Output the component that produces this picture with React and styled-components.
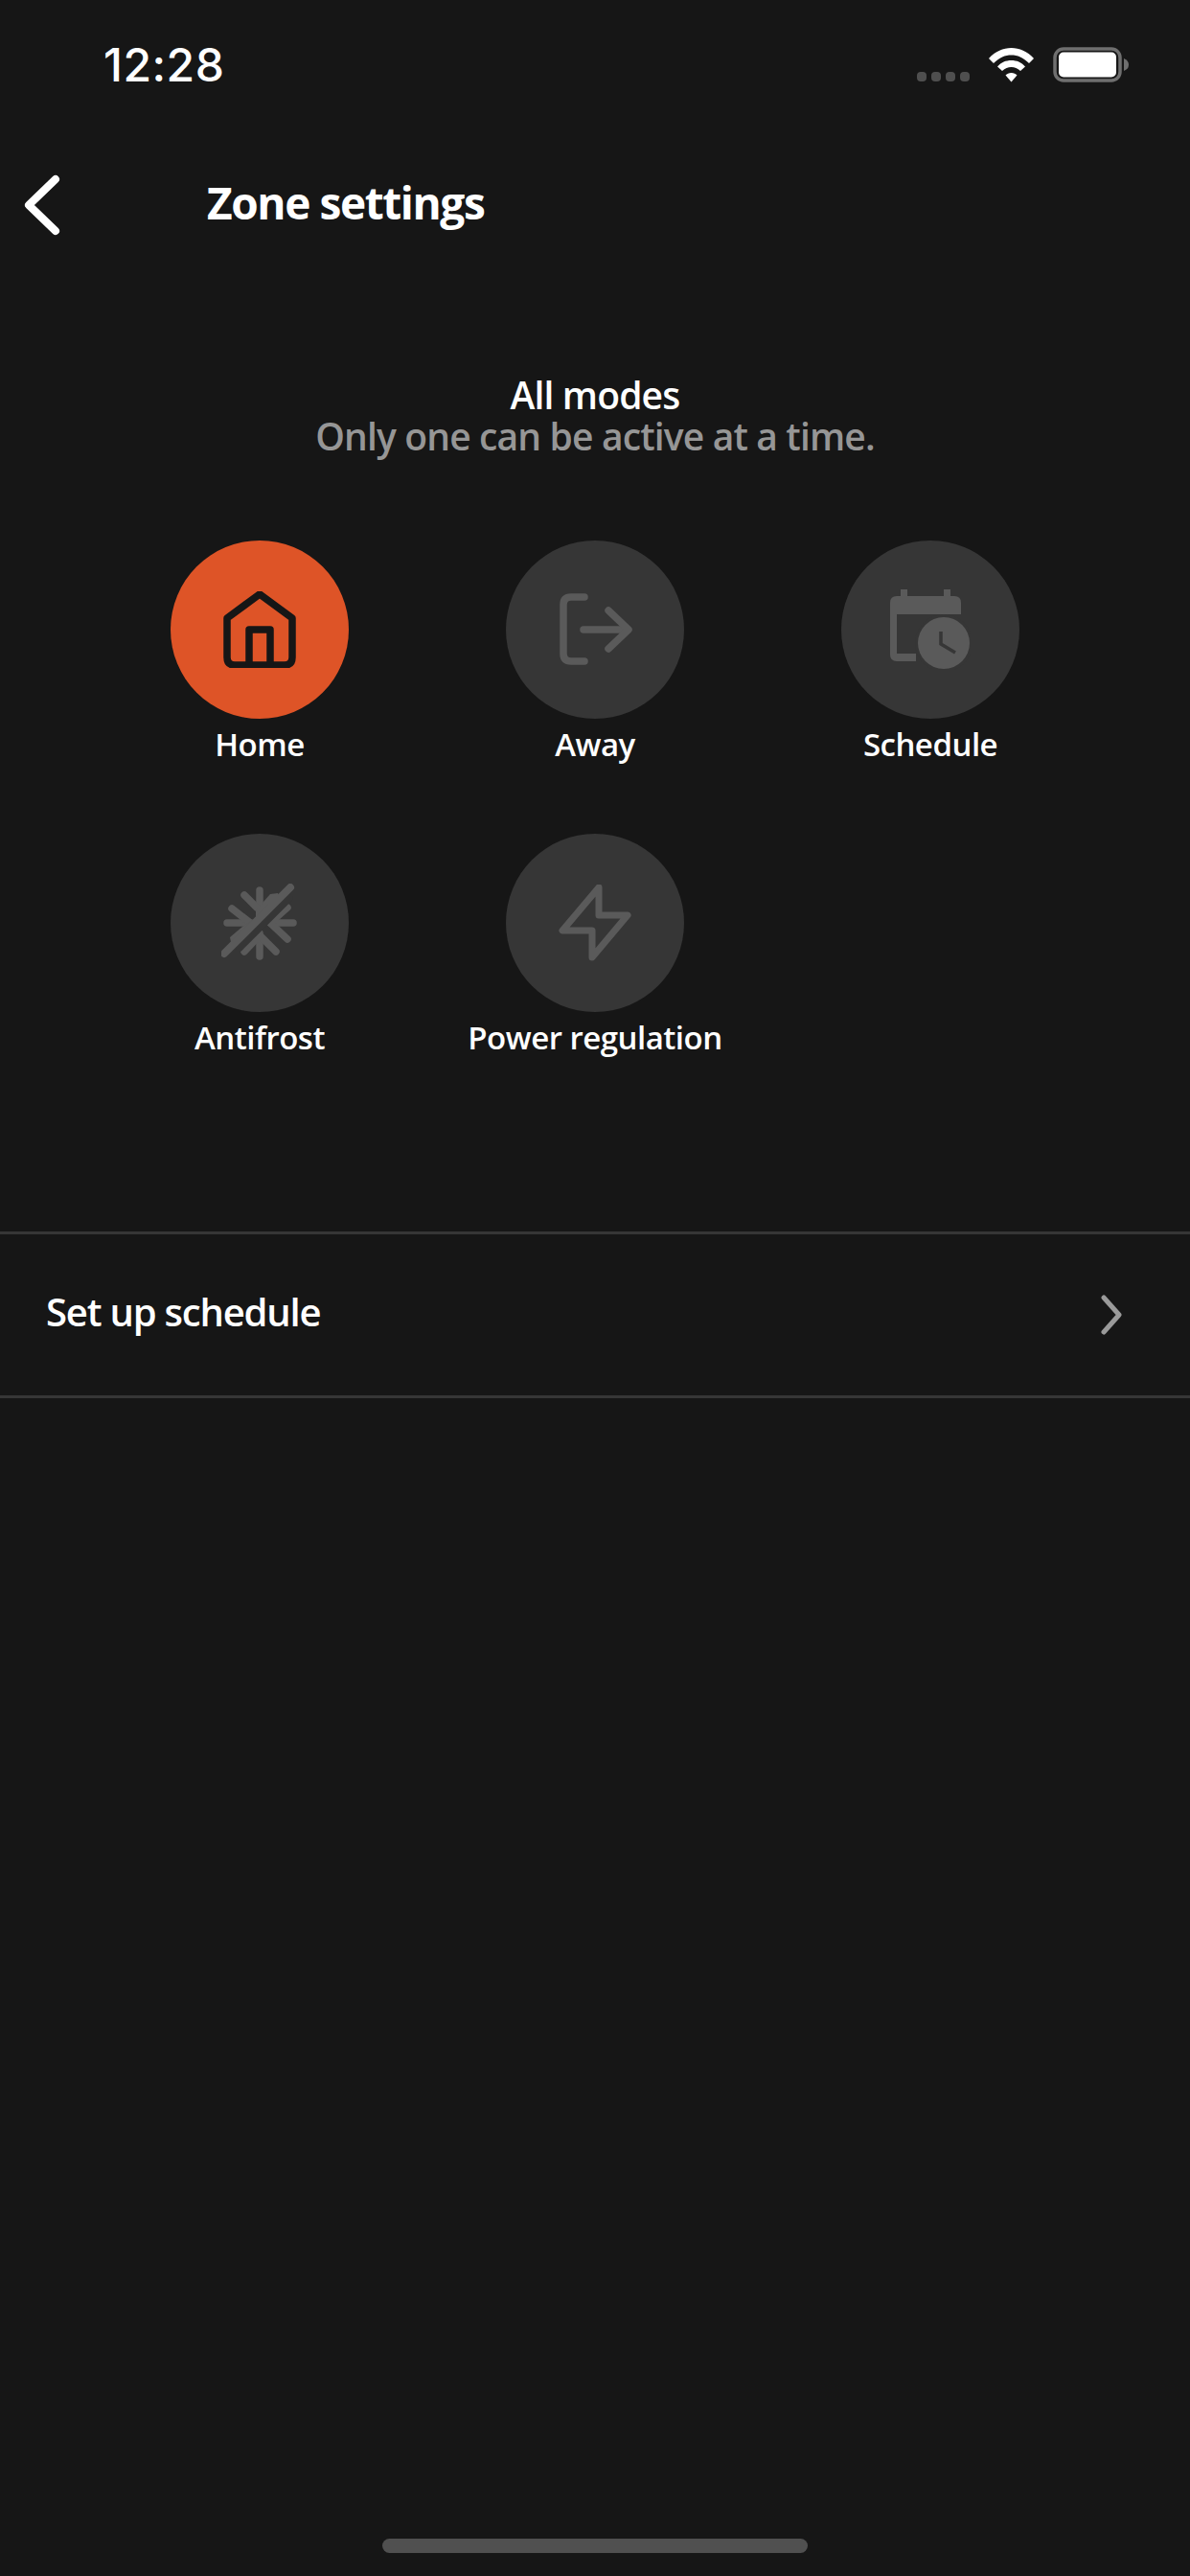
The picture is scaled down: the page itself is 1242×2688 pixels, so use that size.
import React from "react";
import styled, { createGlobalStyle } from "styled-components";

const GlobalStyle = createGlobalStyle`
  html, body {
    margin: 0;
    padding: 0;
    background: #161616;
  }
  * {
    box-sizing: border-box;
  }
`;

const MODES = [
  { key: "home", label: "Home", active: true },
  { key: "away", label: "Away" },
  { key: "schedule", label: "Schedule" },
  { key: "antifrost", label: "Antifrost" },
  { key: "power", label: "Power regulation" },
];

const HomeIcon = () => (
  <svg width="80" height="80" viewBox="81 77 80 80" fill="none" stroke="currentColor" strokeWidth="7.500" strokeLinejoin="round">
    <path d="M121 80 L155 105 V146 Q155 154 147 154 H95 Q87 154 87 146 V105 Z" />
    <path d="M110 154 V117 H132 V154" />
  </svg>
);

const AwayIcon = () => (
  <svg width="80" height="80" viewBox="61 57 80 80" fill="none" stroke="currentColor" strokeWidth="7.500" strokeLinecap="round" strokeLinejoin="round">
    <path d="M90 63 H76 Q68 63 68 71 V122 Q68 130 76 130 H90" />
    <path d="M89 97 H135" />
    <path d="M115 77 L136 97 L115 117" />
  </svg>
);

const ScheduleIcon = () => (
  <svg width="84" height="84" viewBox="0 0 84 84">
    <path
      fill="currentColor"
      d="M11 0 H18 V7 H56 V0 H63 V7 H67 Q74 7 74 14 V26 H7 V67 H27 V75 H7 Q0 75 0 68 V14 Q0 7 7 7 H11 Z"
    />
    <circle cx="56" cy="56" r="30" fill="#363636" />
    <circle cx="56" cy="56" r="27" fill="currentColor" />
    <path d="M53 44 V57 L68 66" fill="none" stroke="#363636" strokeWidth="3.500" />
  </svg>
);

const AntifrostIcon = () => (
  <svg width="80" height="82" viewBox="21 22 80 82" fill="none" stroke="currentColor" strokeWidth="7.500" strokeLinecap="round">
    <path d="M61 29 V52" />
    <path d="M45 34 L58 47" />
    <path d="M27 63 H52" />
    <path d="M32 48 L50 62" />
    <path d="M72 63 H96" />
    <path d="M90 47 L72 63 L90 80" />
    <path d="M61 74 V98" />
    <path d="M45 93 L61 76 L78 93" />
    <polygon points="30,78 43,67 57,58 57,50 72,33 80,32 82,38 32,88" fill="currentColor" stroke="none" />
    <path d="M40 89 L92 37" stroke="#363636" />
    <path d="M24 95 L93 26" strokeWidth="8" />
  </svg>
);

const BoltIcon = () => (
  <svg width="80" height="80" viewBox="581 923 80 80" fill="none" stroke="currentColor" strokeWidth="7" strokeLinejoin="round">
    <path d="M625 926 L587 971 H618 V999 L655 955 H625 Z" />
  </svg>
);

const ICONS = {
  home: HomeIcon,
  away: AwayIcon,
  schedule: ScheduleIcon,
  antifrost: AntifrostIcon,
  power: BoltIcon,
};

const Screen = styled.div`
  width: 1242px;
  height: 2688px;
  background: #161616;
  color: #fff;
  font-family: "Open Sans", "Noto Sans", sans-serif;
  display: flex;
  flex-direction: column;
  overflow: hidden;
`;

const StatusBar = styled.div`
  height: 132px;
  padding: 44px 63px 0 108px;
  display: flex;
  justify-content: space-between;
  align-items: flex-start;
`;

const Clock = styled.span`
  font-family: Inter, "Open Sans", sans-serif;
  font-size: 48px;
  line-height: 48px;
  font-weight: 500;
  letter-spacing: 0.5px;
`;

const StatusIcons = styled.div`
  display: flex;
  align-items: flex-end;
  gap: 20px;
  height: 37px;
  margin-top: 5px;
`;

const SignalDots = styled.div`
  display: flex;
  gap: 5px;
  margin-bottom: 1px;
`;

const Dot = styled.i`
  width: 10px;
  height: 10px;
  border-radius: 4px;
  background: #4f4f4f;
`;

const NavBar = styled.div`
  height: 160px;
  padding-left: 24px;
  display: flex;
  align-items: center;
`;

const BackButton = styled.div`
  width: 192px;
  margin-top: 4px;
  display: flex;
  align-items: center;
`;

const Title = styled.h1`
  margin: 0 0 2px;
  font-size: 46px;
  font-weight: 700;
  letter-spacing: -1.4px;
`;

const Intro = styled.div`
  margin-top: 98px;
  text-align: center;
  font-size: 39px;
  line-height: 43px;
  font-weight: 600;
  letter-spacing: -0.85px;
`;

const IntroLine = styled.div`
  color: ${(p) => (p.$muted ? "#969696" : "#fff")};
`;

const ModeGrid = styled.div`
  margin-top: 88px;
  padding: 0 96px;
  display: grid;
  grid-template-columns: repeat(3, 350px);
  grid-auto-rows: 306px;
`;

const Mode = styled.div`
  display: flex;
  flex-direction: column;
  align-items: center;
`;

const ModeCircle = styled.div`
  width: 186px;
  height: 186px;
  border-radius: 50%;
  display: flex;
  align-items: center;
  justify-content: center;
  background: ${(p) => (p.$active ? "#de5427" : "#363636")};
  color: ${(p) => (p.$active ? "#161616" : "#5a5a5a")};
`;

const ModeLabel = styled.span`
  margin-top: 5px;
  font-size: 33px;
  line-height: 44px;
  font-weight: 600;
  letter-spacing: -0.5px;
  white-space: nowrap;
`;

const ScheduleRow = styled.div`
  margin-top: 109px;
  height: 174px;
  padding: 0 71px 0 48px;
  border-top: 3px solid #363636;
  border-bottom: 3px solid #363636;
  display: flex;
  align-items: center;
  justify-content: space-between;
`;

const RowLabel = styled.span`
  margin-bottom: 7px;
  font-size: 40px;
  font-weight: 600;
  letter-spacing: -1.2px;
`;

const HomeIndicator = styled.div`
  margin: auto auto 24px;
  width: 444px;
  height: 15px;
  border-radius: 8px;
  background: #505050;
`;

export default function App() {
  return (
    <Screen>
      <GlobalStyle />
      <StatusBar>
        <Clock>12:28</Clock>
        <StatusIcons>
          <SignalDots>
            <Dot />
            <Dot />
            <Dot />
            <Dot />
          </SignalDots>
          <svg width="47" height="36" viewBox="0 0 47 36" fill="#fff">
            <path d="M23.500 0 C32 0 40 3.500 47 11 L42 16 C36 10 30 7.500 23.500 7.500 C17 7.500 11 10 5 16 L0 11 C7 3.500 15 0 23.500 0 Z" />
            <path d="M23.500 13 C29 13 34 15 38 19.500 L33 24 C30 21.500 27 20 23.500 20 C20 20 17 21.500 14 24 L9 19.500 C13 15 18 13 23.500 13 Z" />
            <path d="M23.500 26 C26 26 28 27 29.500 28.500 L23.500 35.500 L17.500 28.500 C19 27 21 26 23.500 26 Z" />
          </svg>
          <svg width="80" height="37" viewBox="0 0 80 37">
            <rect x="2" y="2" width="68" height="33" rx="9" fill="none" stroke="#6f6f6f" strokeWidth="3.500" />
            <rect x="6" y="5.500" width="60" height="26" rx="5" fill="#fff" />
            <path d="M74 12 Q79 14 79 18.500 Q79 23 74 25 Z" fill="#6f6f6f" />
          </svg>
        </StatusIcons>
      </StatusBar>

      <NavBar>
        <BackButton>
          <svg width="40" height="64" viewBox="0 0 40 64" fill="none" stroke="#fff" strokeWidth="8" strokeLinecap="round" strokeLinejoin="round">
            <path d="M34 5 L6 32 L34 59" />
          </svg>
        </BackButton>
        <Title>Zone settings</Title>
      </NavBar>

      <Intro>
        <IntroLine>All modes</IntroLine>
        <IntroLine $muted>Only one can be active at a time.</IntroLine>
      </Intro>

      <ModeGrid>
        {MODES.map(({ key, label, active }) => {
          const Icon = ICONS[key];
          return (
            <Mode key={key}>
              <ModeCircle $active={active}>
                <Icon />
              </ModeCircle>
              <ModeLabel>{label}</ModeLabel>
            </Mode>
          );
        })}
      </ModeGrid>

      <ScheduleRow>
        <RowLabel>Set up schedule</RowLabel>
        <svg width="22" height="42" viewBox="0 0 22 42" fill="none" stroke="#9a9a9a" strokeWidth="5" strokeLinecap="round" strokeLinejoin="round">
          <path d="M3 3 L19 21 L3 39" />
        </svg>
      </ScheduleRow>

      <HomeIndicator />
    </Screen>
  );
}
